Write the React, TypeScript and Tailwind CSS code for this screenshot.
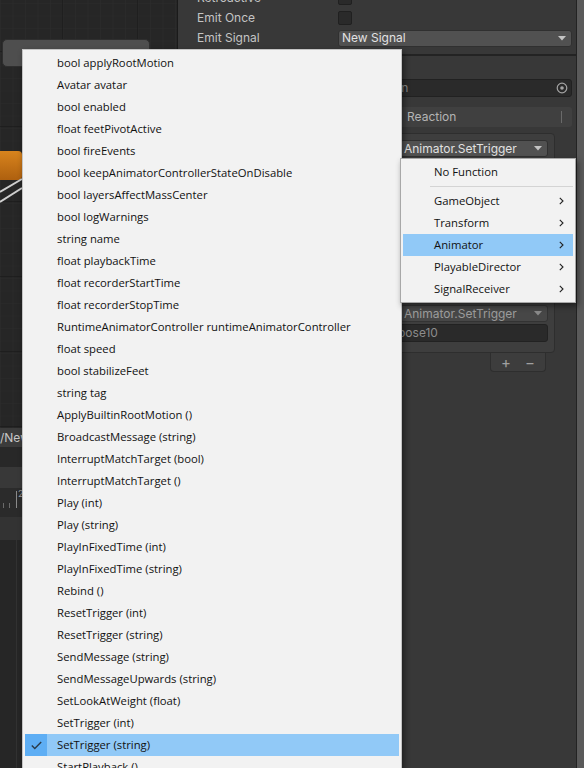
import React from 'react';

const members = [
  'bool applyRootMotion',
  'Avatar avatar',
  'bool enabled',
  'float feetPivotActive',
  'bool fireEvents',
  'bool keepAnimatorControllerStateOnDisable',
  'bool layersAffectMassCenter',
  'bool logWarnings',
  'string name',
  'float playbackTime',
  'float recorderStartTime',
  'float recorderStopTime',
  'RuntimeAnimatorController runtimeAnimatorController',
  'float speed',
  'bool stabilizeFeet',
  'string tag',
  'ApplyBuiltinRootMotion ()',
  'BroadcastMessage (string)',
  'InterruptMatchTarget (bool)',
  'InterruptMatchTarget ()',
  'Play (int)',
  'Play (string)',
  'PlayInFixedTime (int)',
  'PlayInFixedTime (string)',
  'Rebind ()',
  'ResetTrigger (int)',
  'ResetTrigger (string)',
  'SendMessage (string)',
  'SendMessageUpwards (string)',
  'SetLookAtWeight (float)',
  'SetTrigger (int)',
  'SetTrigger (string)',
  'StartPlayback ()',
];

const components = ['GameObject', 'Transform', 'Animator', 'PlayableDirector', 'SignalReceiver'];

const Arrow = ({ color = '#c4c4c4' }: { color?: string }) => (
  <svg width="8" height="5" viewBox="0 0 8 5">
    <path d="M0 0H8L4 4.5Z" fill={color} />
  </svg>
);

const Chevron = () => (
  <svg width="5" height="8" viewBox="0 0 5 8">
    <path d="M0.8 0.8L4 4L0.8 7.2" fill="none" stroke="#222" strokeWidth="1.1" />
  </svg>
);

const Check = () => (
  <svg width="11" height="9" viewBox="0 0 11 9">
    <path d="M0.8 4.6L3.8 7.6L10.2 1" fill="none" stroke="#2b3a48" strokeWidth="1.4" />
  </svg>
);

const GraphCanvas = () => (
  <div className="relative h-[428px] overflow-hidden">
    <svg className="absolute inset-0" width="178" height="428">
      <defs>
        <pattern id="minor" x="-12" y="-23" width="12.5" height="12.5" patternUnits="userSpaceOnUse">
          <path d="M12.5 0V12.5H0" fill="none" stroke="#2c2c2c" strokeWidth="1" />
        </pattern>
        <pattern id="major" x="-12" y="-23" width="75" height="75" patternUnits="userSpaceOnUse">
          <rect width="75" height="75" fill="url(#minor)" />
          <path d="M75 0V75H0" fill="none" stroke="#1c1c1c" strokeWidth="1.5" />
        </pattern>
      </defs>
      <rect width="178" height="428" fill="#262626" />
      <rect width="178" height="428" fill="url(#major)" />
    </svg>

    {/* state nodes */}
    <div className="absolute left-[2px] top-[39px] w-[148px] h-[28px] rounded-[5px] bg-[#4e4e4e] border border-[#2e2e2e] flex justify-center pt-[6px] text-[12px] leading-[16px] text-[#bdbdbd]">
      pose10
    </div>
    <div className="absolute left-[-60px] top-[151px] w-[82px] h-[29px] rounded-[4px] bg-gradient-to-b from-[#d8841d] to-[#ae600f]" />
    <svg className="absolute left-0 top-[178px]" width="24" height="28">
      <line x1="0" y1="14" x2="22" y2="1" stroke="#cfcfcf" strokeWidth="2" />
      <line x1="0" y1="24" x2="22" y2="10" stroke="#cfcfcf" strokeWidth="2" />
    </svg>
  </div>
);

const TimelinePane = () => (
  <div className="flex flex-col flex-1">
    <div className="h-[19px] bg-[#3b3b3b] flex items-center text-[12px] text-[#c8c8c8] whitespace-nowrap">/New Timeline</div>
    <div className="h-[20px] bg-[#282828]" />
    <div className="h-[21px] bg-[#383838]" />
    <div className="h-[20px] bg-[#2b2b2b] flex items-stretch">
      <svg width="18" height="20">
        <line x1="3.5" y1="15" x2="3.5" y2="20" stroke="#6a6a6a" />
        <line x1="9.5" y1="15" x2="9.5" y2="20" stroke="#6a6a6a" />
        <line x1="16.5" y1="3" x2="16.5" y2="20" stroke="#8a8a8a" />
      </svg>
      <span className="text-[9px] leading-[12px] text-[#9a9a9a]">2</span>
    </div>
    <div className="h-[9px] bg-[#2a2a2a]" />
    <div className="h-[23px] bg-[#333333]" />
    <div className="flex-1 bg-[#262626]">
      <div className="ml-[16px] w-px h-full bg-[#313131]" />
    </div>
  </div>
);

const Checkbox = () => <div className="w-[14px] h-[14px] rounded-[2px] bg-[#2a2a2a] border border-[#202020]" />;

const Inspector = () => (
  <div className="w-[399px] bg-[#383838] flex flex-col border-r border-[#232323] text-[12px] text-[#c4c4c4]">
    <div className="-mt-[12px] flex flex-col pl-[19px] pr-[4px]">
      <div className="h-[20px] flex items-center">
        <span className="w-[141px]">Retroactive</span>
        <Checkbox />
      </div>
      <div className="h-[20px] flex items-center">
        <span className="w-[141px]">Emit Once</span>
        <Checkbox />
      </div>
      <div className="h-[20px] flex items-center">
        <span className="w-[141px]">Emit Signal</span>
        <div className="flex-1 h-[17px] rounded-[3px] bg-[#515151] border border-[#303030] flex items-center justify-between pl-[3px] pr-[5px] text-[#e2e2e2]">
          <span>New Signal</span>
          <Arrow />
        </div>
      </div>
    </div>

    <div className="mt-[6px] h-[2px] bg-[#232323]" />

    <div className="mt-[23px] ml-[19px] mr-[4px] flex items-center">
      <span className="w-[118px]">Receiver</span>
      <div className="flex-1 h-[18px] rounded-[3px] bg-[#2a2a2a] border border-[#212121] flex items-center text-[#8a8a8a]">
        <span className="pl-[5px] flex-1 whitespace-nowrap">Signal Reaction</span>
        <div className="w-[19px] h-full flex items-center justify-center">
          <svg width="12" height="12" viewBox="0 0 12 12">
            <circle cx="6" cy="6" r="4.8" fill="none" stroke="#a4a4a4" strokeWidth="1.2" />
            <circle cx="6" cy="6" r="1.8" fill="#a4a4a4" />
          </svg>
        </div>
      </div>
    </div>

    <div className="mt-[10px] ml-[19px] mr-[4px] h-[20px] rounded-[3px] bg-[#404040] flex items-center text-[#b4b4b4]">
      <span className="w-[206px] pl-[4px]">Signal</span>
      <span className="w-[158px] pl-[4px]">Reaction</span>
      <div className="w-px h-[12px] bg-[#6a6a6a]" />
    </div>

    <div className="mt-[6px] ml-[162px] mr-[21px] rounded-[4px] bg-[#3e3e3e] border border-[#2e2e2e] pt-[6px] pb-[10px] pl-[4px] pr-[6px] flex flex-col">
      <div className="h-[17px] flex gap-[2px]">
        <div className="w-[53px] rounded-[3px] bg-[#515151]" />
        <div className="flex-1 rounded-[3px] bg-[#515151] border border-[#303030] flex items-center justify-between pl-[3px] pr-[5px] text-[#e0e0e0]">
          <span>Animator.SetTrigger</span>
          <Arrow />
        </div>
      </div>
      <div className="mt-[2px] h-[18px] flex gap-[2px]">
        <div className="w-[53px] rounded-[3px] bg-[#2a2a2a]" />
        <div className="flex-1 rounded-[3px] bg-[#2a2a2a]" />
      </div>
      <div className="mt-[128px] h-[17px] flex gap-[2px]">
        <div className="w-[53px] rounded-[3px] bg-[#474747]" />
        <div className="flex-1 rounded-[3px] bg-[#474747] border border-[#333] flex items-center justify-between pl-[3px] pr-[5px] text-[#9c9c9c]">
          <span>Animator.SetTrigger</span>
          <Arrow color="#8a8a8a" />
        </div>
      </div>
      <div className="mt-[2px] h-[18px] flex gap-[2px]">
        <div className="w-[53px] rounded-[3px] bg-[#2a2a2a]" />
        <div className="flex-1 -ml-[4px] rounded-[3px] bg-[#2a2a2a] border border-[#222] flex items-center pl-[1px] text-[#8c8c8c]">
          <span>pose10</span>
        </div>
      </div>
    </div>

    <div className="flex justify-end mr-[30px]">
      <div className="w-[56px] h-[19px] rounded-b-[4px] bg-[#3d3d3d] border border-t-0 border-[#2e2e2e] flex items-center justify-center gap-[14px] text-[15px] leading-[15px] text-[#a0a0a0]">
        <span>+</span>
        <span>−</span>
      </div>
    </div>
  </div>
);

const MemberMenu = () => (
  <div className="absolute left-[22px] top-[49px] w-[380px] h-[740px] bg-[#f2f2f2] border border-[#c4c4c4] p-[2px] shadow-[2px_3px_6px_rgba(0,0,0,0.45)] font-['Open_Sans',sans-serif] text-[11.3px] text-[#111]">
    {members.map((m) => {
      const selected = m === 'SetTrigger (string)';
      return (
        <div key={m} className={`flex h-[22px] items-center whitespace-nowrap ${selected ? 'bg-[#91c9f7]' : ''}`}>
          <div className={`w-[22px] h-full flex items-center justify-center ${selected ? 'bg-[#5eaef4]' : ''}`}>
            {selected && <Check />}
          </div>
          <span className="pl-[10px]">{m}</span>
        </div>
      );
    })}
  </div>
);

const ComponentMenu = () => (
  <div className="absolute left-[400px] top-[158px] w-[176px] bg-[#f2f2f2] border border-[#a8a8a8] p-[2px] shadow-[2px_3px_6px_rgba(0,0,0,0.45)] font-['Open_Sans',sans-serif] text-[11.3px] text-[#111]">
    <div className="h-[22px] flex items-center pl-[31px]">No Function</div>
    <div className="h-[7px] flex items-center ml-[27px]">
      <div className="w-full h-px bg-[#d4d4d4]" />
    </div>
    {components.map((c) => (
      <div key={c} className={`h-[22px] flex items-center justify-between pl-[31px] pr-[9px] ${c === 'Animator' ? 'bg-[#91c9f7]' : ''}`}>
        <span>{c}</span>
        <Chevron />
      </div>
    ))}
  </div>
);

export default function App() {
  return (
    <div className="relative w-[584px] h-[768px] overflow-hidden flex bg-[#262626] font-['Inter',sans-serif]">
      <div className="w-[178px] flex flex-col border-r border-[#1a1a1a]">
        <GraphCanvas />
        <TimelinePane />
      </div>
      <Inspector />
      <div className="flex-1 bg-[#5a5a5a]" />

      <MemberMenu />
      <ComponentMenu />
    </div>
  );
}
